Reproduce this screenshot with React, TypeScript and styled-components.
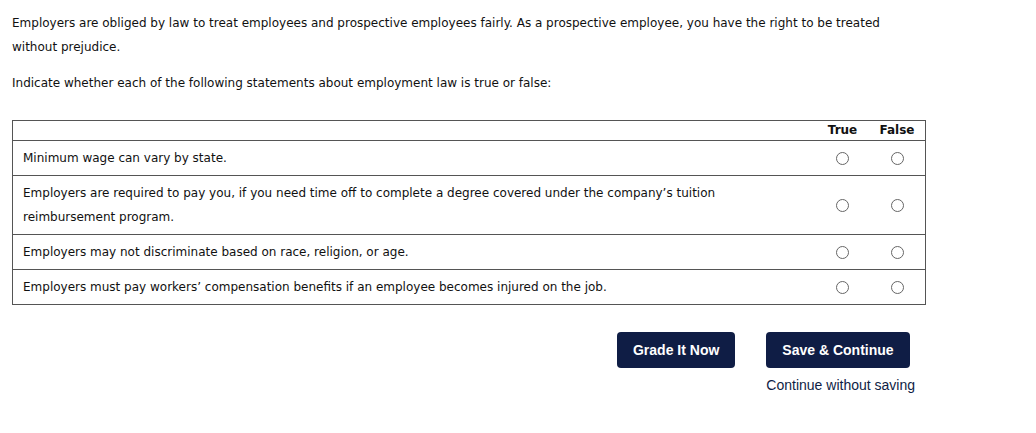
import React from 'react';
import styled, { createGlobalStyle } from 'styled-components';

const GlobalStyle = createGlobalStyle`
  body {
    margin: 0;
    background: #ffffff;
    font-family: "DejaVu Sans", Verdana, sans-serif;
    color: #111111;
  }
`;

const Page = styled.div`
  width: 914px;
  padding: 11px 0 0 12px;
`;

const Paragraph = styled.p`
  margin: 0 0 12px;
  font-size: 12px;
  line-height: 24px;
`;

const Table = styled.div`
  margin-top: 25px;
  border: 1px solid #555555;
`;

const Row = styled.div<{ $head?: boolean }>`
  display: grid;
  grid-template-columns: 1fr 53px 56px;
  align-items: center;
  border-top: ${(p) => (p.$head ? 'none' : '1px solid #555555')};
`;

const Statement = styled.div`
  max-width: 740px;
  padding: 5px 10px;
  font-size: 12px;
  line-height: 24px;
`;

const HeadCell = styled.div`
  text-align: center;
  font-size: 12px;
  font-weight: bold;
  line-height: 19px;
`;

const Cell = styled.div`
  display: flex;
  justify-content: center;
`;

const Radio = styled.span`
  display: block;
  width: 11px;
  height: 11px;
  border: 1px solid #666666;
  border-radius: 50%;
  background: #ffffff;
`;

const Actions = styled.div`
  display: flex;
  justify-content: flex-end;
  align-items: flex-start;
  gap: 31px;
  margin-top: 27px;
  padding-right: 11px;
  font-family: "Liberation Sans", Arial, sans-serif;
`;

const ActionGroup = styled.div`
  display: flex;
  flex-direction: column;
  align-items: flex-start;
`;

const Button = styled.button`
  height: 36px;
  padding: 0 16px;
  border: none;
  border-radius: 4px;
  background: #0f1d45;
  color: #ffffff;
  font-family: "Liberation Sans", Arial, sans-serif;
  font-size: 14px;
  font-weight: bold;
  cursor: pointer;
`;

const Link = styled.a`
  margin-top: 8px;
  color: #0f1d45;
  font-size: 14px;
  line-height: 18px;
  text-decoration: none;
`;

const statements = [
  'Minimum wage can vary by state.',
  'Employers are required to pay you, if you need time off to complete a degree covered under the company\u2019s tuition reimbursement program.',
  'Employers may not discriminate based on race, religion, or age.',
  'Employers must pay workers\u2019 compensation benefits if an employee becomes injured on the job.',
];

const App: React.FC = () => {
  return (
    <Page>
      <GlobalStyle />
      <Paragraph>
        Employers are obliged by law to treat employees and prospective employees fairly. As a prospective
        employee, you have the right to be treated without prejudice.
      </Paragraph>
      <Paragraph>Indicate whether each of the following statements about employment law is true or false:</Paragraph>
      <Table>
        <Row $head>
          <div />
          <HeadCell>True</HeadCell>
          <HeadCell>False</HeadCell>
        </Row>
        {statements.map((s) => (
          <Row key={s}>
            <Statement>{s}</Statement>
            <Cell>
              <Radio />
            </Cell>
            <Cell>
              <Radio />
            </Cell>
          </Row>
        ))}
      </Table>
      <Actions>
        <ActionGroup>
          <Button>Grade It Now</Button>
        </ActionGroup>
        <ActionGroup>
          <Button>Save &amp; Continue</Button>
          <Link href="#">Continue without saving</Link>
        </ActionGroup>
      </Actions>
    </Page>
  );
};

export default App;
